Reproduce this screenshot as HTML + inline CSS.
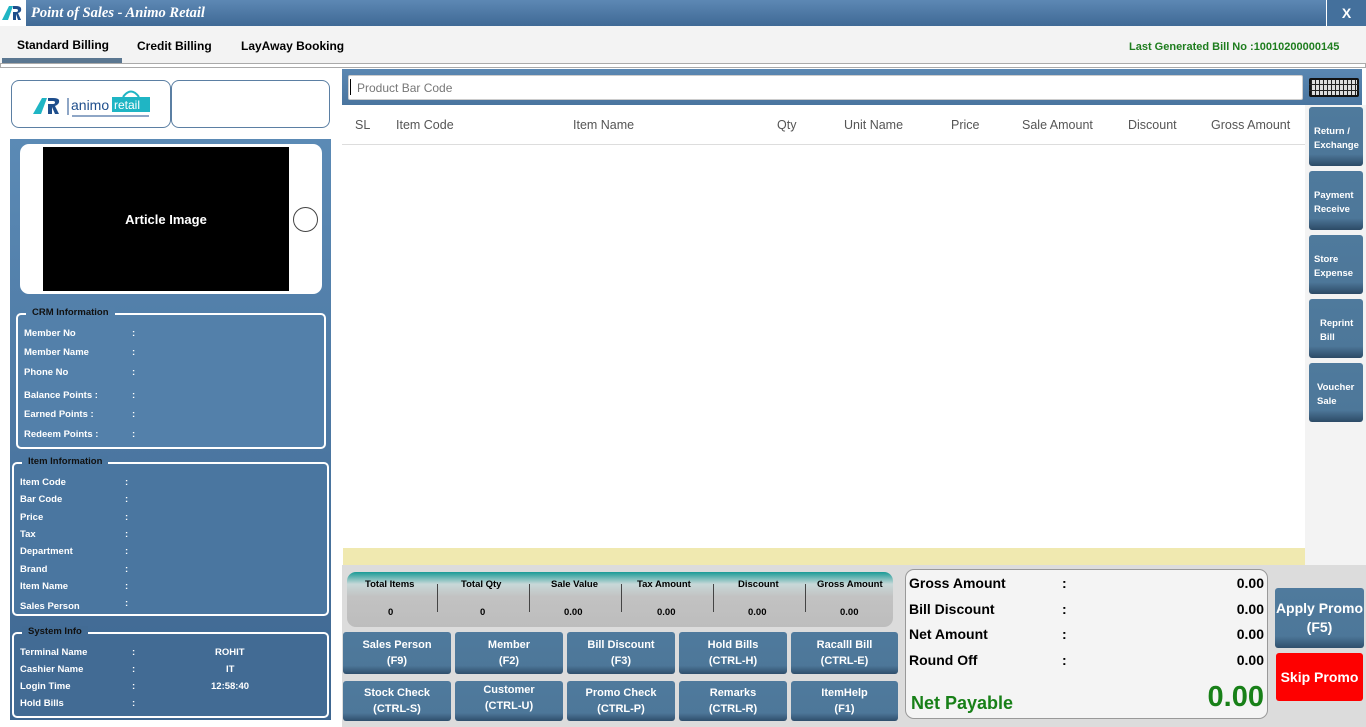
<!DOCTYPE html>
<html><head><meta charset="utf-8"><style>
*{margin:0;padding:0;box-sizing:border-box}
body{width:1366px;height:727px;position:relative;overflow:hidden;background:#fff;font-family:"Liberation Sans",sans-serif;font-size:12px}
.a{position:absolute}
.b{font-weight:bold}
.btn{position:absolute;background:linear-gradient(#4f7a9d 0,#4d7799 80%,#2f4f6c 100%);color:#fff;font-weight:bold;font-size:11px;text-align:center;border-radius:3px;display:flex;align-items:center;justify-content:center;line-height:16px}
.rb{position:absolute;left:1309px;width:54px;height:59px;background:linear-gradient(#4f7a9d 0,#4d7799 80%,#2c4a66 100%);color:#fff;font-weight:bold;font-size:9.5px;border-radius:3px;padding:18px 0 0 5px;line-height:14px}
.grp{position:absolute;border:2px solid #fff;border-radius:5px}
.grp .t{position:absolute;top:-8px;left:8px;padding:0 6px;color:#111;font-weight:bold;font-size:9.5px;background:inherit}
.lbl{position:absolute;color:#fff;font-weight:bold;font-size:9.5px}
.h{position:absolute;top:118px;color:#555;font-size:12.5px}
</style></head><body>
<div class="a" style="left:0;top:0;width:1366px;height:26px;background:linear-gradient(#5d88b4,#3f6995)"></div>
<div class="a" style="left:0;top:0;width:26px;height:26px;background:#fff"><svg width="26" height="26"><path d="M2 20 L9 6 L13 6 L8 20 Z" fill="#1fb5c4"/><path d="M11 12 L13 12 L13 20 L16 20 L16 14 L18 20 L21 20 L18 13 Q22 12 21 8 Q20 6 16 6 L13 6 L13 9 L16 9 Q18 9 18 10.5 Q18 12 16 12Z" fill="#1e4e8c"/></svg></div>
<div class="a" style="left:31px;top:5px;color:#fff;font-family:'Liberation Serif',serif;font-style:italic;font-weight:bold;font-size:14.5px">Point of Sales - Animo Retail</div>
<div class="a" style="left:1326px;top:0;width:40px;height:26px;background:#44709c;color:#fff;font-weight:bold;font-size:14px;text-align:center;line-height:26px;border-left:1px solid #fff">X</div>
<div class="a" style="left:0;top:26px;width:1366px;height:37px;background:#f3f3f3"></div>
<div class="a b" style="left:17px;top:38px;font-size:12px">Standard Billing</div>
<div class="a b" style="left:137px;top:39px;font-size:12px">Credit Billing</div>
<div class="a b" style="left:241px;top:39px;font-size:12px">LayAway Booking</div>
<div class="a" style="left:2px;top:58px;width:120px;height:5px;background:#5b7791"></div>
<div class="a" style="left:0;top:63px;width:1366px;height:5px;border:1px solid #aaa;background:#fff"></div>
<div class="a b" style="left:1129px;top:41px;color:#1e7d1e;font-size:11px">Last Generated Bill No :10010200000145</div>
<div class="a" style="left:11px;top:80px;width:160px;height:48px;border:1px solid #5b7fa3;border-radius:8px"></div>
<div class="a" style="left:171px;top:80px;width:159px;height:48px;border:1px solid #5b7fa3;border-radius:8px"></div>
<div class="a" style="left:32px;top:88px;width:120px;height:32px">
<svg width="120" height="32"><path d="M1 26 L10 10 L15 10 L9 26Z" fill="#1fb5c4"/><path d="M13 16 L16 16 L16 26 L20 26 L20 19 L23 26 L27 26 L23 18 Q28 16 27 12 Q26 10 21 10 L16 10 L16 13 L21 13 Q23 13 23 14.5 Q23 16 21 16Z" fill="#1e4e8c"/><line x1="36" y1="10" x2="36" y2="27" stroke="#1e4e8c"/><text x="39" y="22" font-family="Liberation Sans" font-size="14" fill="#1e4e8c">animo</text><rect x="80" y="9" width="38" height="15" fill="#1fb5c4"/><path d="M91 9 Q99 -2 107 9" stroke="#1fb5c4" fill="none" stroke-width="2"/><text x="82" y="21" font-family="Liberation Sans" font-size="12" fill="#fff">retail</text><line x1="40" y1="28" x2="117" y2="28" stroke="#1e4e8c" stroke-width="1"/></svg></div>
<div class="a" style="left:10px;top:139px;width:321px;height:581px;background:linear-gradient(#5b8ab5,#3e6690)"></div>
<div class="a" style="left:20px;top:144px;width:302px;height:150px;background:#fff;border-radius:9px"></div>
<div class="a" style="left:43px;top:147px;width:246px;height:144px;background:#000;color:#fff;font-weight:bold;font-size:13px;display:flex;align-items:center;justify-content:center">Article Image</div>
<div class="a" style="left:293px;top:207px;width:25px;height:25px;border:1px solid #444;border-radius:50%"></div>
<div class="grp" style="left:16px;top:313px;width:310px;height:136px;background:#5380aa"><span class="t">CRM Information</span></div>
<div class="lbl" style="left:24px;top:328px">Member No</div><div class="lbl" style="left:132px;top:328px">:</div>
<div class="lbl" style="left:24px;top:347px">Member Name</div><div class="lbl" style="left:132px;top:347px">:</div>
<div class="lbl" style="left:24px;top:367px">Phone No</div><div class="lbl" style="left:132px;top:367px">:</div>
<div class="lbl" style="left:24px;top:390px">Balance Points :</div><div class="lbl" style="left:132px;top:390px">:</div>
<div class="lbl" style="left:24px;top:409px">Earned Points :</div><div class="lbl" style="left:132px;top:409px">:</div>
<div class="lbl" style="left:24px;top:429px">Redeem Points :</div><div class="lbl" style="left:132px;top:429px">:</div>
<div class="grp" style="left:12px;top:462px;width:317px;height:154px;background:#4a76a0"><span class="t">Item Information</span></div>
<div class="lbl" style="left:20px;top:477px">Item Code</div><div class="lbl" style="left:125px;top:477px">:</div>
<div class="lbl" style="left:20px;top:494px">Bar Code</div><div class="lbl" style="left:125px;top:494px">:</div>
<div class="lbl" style="left:20px;top:512px">Price</div><div class="lbl" style="left:125px;top:512px">:</div>
<div class="lbl" style="left:20px;top:529px">Tax</div><div class="lbl" style="left:125px;top:529px">:</div>
<div class="lbl" style="left:20px;top:546px">Department</div><div class="lbl" style="left:125px;top:546px">:</div>
<div class="lbl" style="left:20px;top:564px">Brand</div><div class="lbl" style="left:125px;top:564px">:</div>
<div class="lbl" style="left:20px;top:581px">Item Name</div><div class="lbl" style="left:125px;top:581px">:</div>
<div class="lbl" style="left:20px;top:601px">Sales Person</div><div class="lbl" style="left:125px;top:598px">:</div>
<div class="grp" style="left:12px;top:632px;width:317px;height:86px;background:#426b94"><span class="t">System Info</span></div>
<div class="lbl" style="left:20px;top:647px">Terminal Name</div><div class="lbl" style="left:132px;top:647px">:</div><div class="lbl" style="left:215px;top:647px">ROHIT</div>
<div class="lbl" style="left:20px;top:664px">Cashier Name</div><div class="lbl" style="left:132px;top:664px">:</div><div class="lbl" style="left:226px;top:664px">IT</div>
<div class="lbl" style="left:20px;top:681px">Login Time</div><div class="lbl" style="left:132px;top:681px">:</div><div class="lbl" style="left:211px;top:681px">12:58:40</div>
<div class="lbl" style="left:20px;top:698px">Hold Bills</div><div class="lbl" style="left:132px;top:698px">:</div>
<div class="a" style="left:342px;top:69px;width:1020px;height:36px;background:linear-gradient(#5a87b2,#4a759f)"></div>
<div class="a" style="left:348px;top:75px;width:955px;height:25px;background:#fff;border:1px solid #ccc;border-radius:2px;color:#777;font-size:12px;padding:5px 0 0 8px">Product Bar Code</div>
<div class="a" style="left:350px;top:79px;width:1px;height:16px;background:#000"></div>
<div class="a" style="left:1309px;top:78px;width:50px;height:19px;background:repeating-linear-gradient(90deg,#222 0 1px,#ddd 1px 4px);border:2px solid #111;border-radius:2px"></div>
<div class="a" style="left:1309px;top:84px;width:50px;height:1px;background:#222"></div>
<div class="a" style="left:1309px;top:90px;width:50px;height:1px;background:#222"></div>
<div class="a" style="left:1305px;top:105px;width:61px;height:460px;background:#f3f3f3"></div>
<div class="h" style="left:355px">SL</div><div class="h" style="left:396px">Item Code</div><div class="h" style="left:573px">Item Name</div><div class="h" style="left:777px">Qty</div><div class="h" style="left:844px">Unit Name</div><div class="h" style="left:951px">Price</div><div class="h" style="left:1022px">Sale Amount</div><div class="h" style="left:1128px">Discount</div><div class="h" style="left:1211px">Gross Amount</div>
<div class="a" style="left:342px;top:144px;width:963px;height:1px;background:#ddd"></div>
<div class="rb" style="top:107px">Return /<br>Exchange</div>
<div class="rb" style="top:171px">Payment<br>Receive</div>
<div class="rb" style="top:235px">Store<br>Expense</div>
<div class="rb" style="top:299px;padding-left:11px">Reprint<br>Bill</div>
<div class="rb" style="top:363px;padding-left:8px">Voucher<br>Sale</div>
<div class="a" style="left:343px;top:548px;width:962px;height:17px;background:#f0e9b0"></div>
<div class="a" style="left:342px;top:565px;width:1024px;height:162px;background:#dcdcdc"></div>
<div class="a" style="left:347px;top:572px;width:546px;height:55px;border-radius:9px;background:linear-gradient(#1a9a96 0,#c8d8d8 22%,#c2c2c2 45%,#bdbdbd 100%)"></div>
<div class="a b" style="left:347px;top:579px;width:546px;font-size:9.5px">
<span class="a" style="left:18px">Total Items</span><span class="a" style="left:114px">Total Qty</span><span class="a" style="left:204px">Sale Value</span><span class="a" style="left:290px">Tax Amount</span><span class="a" style="left:391px">Discount</span><span class="a" style="left:470px">Gross Amount</span>
<span class="a" style="left:41px;top:28px">0</span><span class="a" style="left:133px;top:28px">0</span><span class="a" style="left:217px;top:28px">0.00</span><span class="a" style="left:310px;top:28px">0.00</span><span class="a" style="left:401px;top:28px">0.00</span><span class="a" style="left:493px;top:28px">0.00</span></div>
<div class="a" style="left:437px;top:584px;width:1px;height:28px;background:#444"></div>
<div class="a" style="left:529px;top:584px;width:1px;height:28px;background:#444"></div>
<div class="a" style="left:621px;top:584px;width:1px;height:28px;background:#444"></div>
<div class="a" style="left:713px;top:584px;width:1px;height:28px;background:#444"></div>
<div class="a" style="left:805px;top:584px;width:1px;height:28px;background:#444"></div>
<div class="btn" style="left:343px;top:632px;width:108px;height:42px">Sales Person<br>(F9)</div>
<div class="btn" style="left:455px;top:632px;width:108px;height:42px">Member<br>(F2)</div>
<div class="btn" style="left:567px;top:632px;width:108px;height:42px">Bill Discount<br>(F3)</div>
<div class="btn" style="left:679px;top:632px;width:108px;height:42px">Hold Bills<br>(CTRL-H)</div>
<div class="btn" style="left:791px;top:632px;width:107px;height:42px">Racalll Bill<br>(CTRL-E)</div>
<div class="btn" style="left:343px;top:681px;width:108px;height:40px">Stock Check<br>(CTRL-S)</div>
<div class="btn" style="left:455px;top:681px;width:108px;height:40px;align-items:flex-start;padding-top:1px">Customer<br>(CTRL-U)</div>
<div class="btn" style="left:567px;top:681px;width:108px;height:40px">Promo Check<br>(CTRL-P)</div>
<div class="btn" style="left:679px;top:681px;width:108px;height:40px">Remarks<br>(CTRL-R)</div>
<div class="btn" style="left:791px;top:681px;width:107px;height:40px">ItemHelp<br>(F1)</div>
<div class="a" style="left:905px;top:569px;width:363px;height:150px;background:#f4f4f4;border:1px solid #999;border-radius:9px"></div>
<div class="a b" style="left:909px;top:571px;font-size:14px;line-height:25.5px">Gross Amount<br>Bill Discount<br>Net Amount<br>Round Off</div>
<div class="a b" style="left:1062px;top:571px;font-size:14px;line-height:25.5px">:<br>:<br>:<br>:</div>
<div class="a b" style="left:1200px;top:571px;width:64px;text-align:right;font-size:14px;line-height:25.5px">0.00<br>0.00<br>0.00<br>0.00</div>
<div class="a b" style="left:911px;top:693px;color:#188018;font-size:18px">Net Payable</div>
<div class="a b" style="left:1160px;top:681px;width:104px;text-align:right;color:#188018;font-size:29px">0.00</div>
<div class="btn" style="left:1275px;top:588px;width:89px;height:60px;font-size:14px;line-height:19px">Apply Promo<br>(F5)</div>
<div class="a b" style="left:1276px;top:653px;width:87px;height:48px;background:#fe0000;color:#fff;font-size:14px;border-radius:3px;display:flex;align-items:center;justify-content:center">Skip Promo</div>
</body></html>
